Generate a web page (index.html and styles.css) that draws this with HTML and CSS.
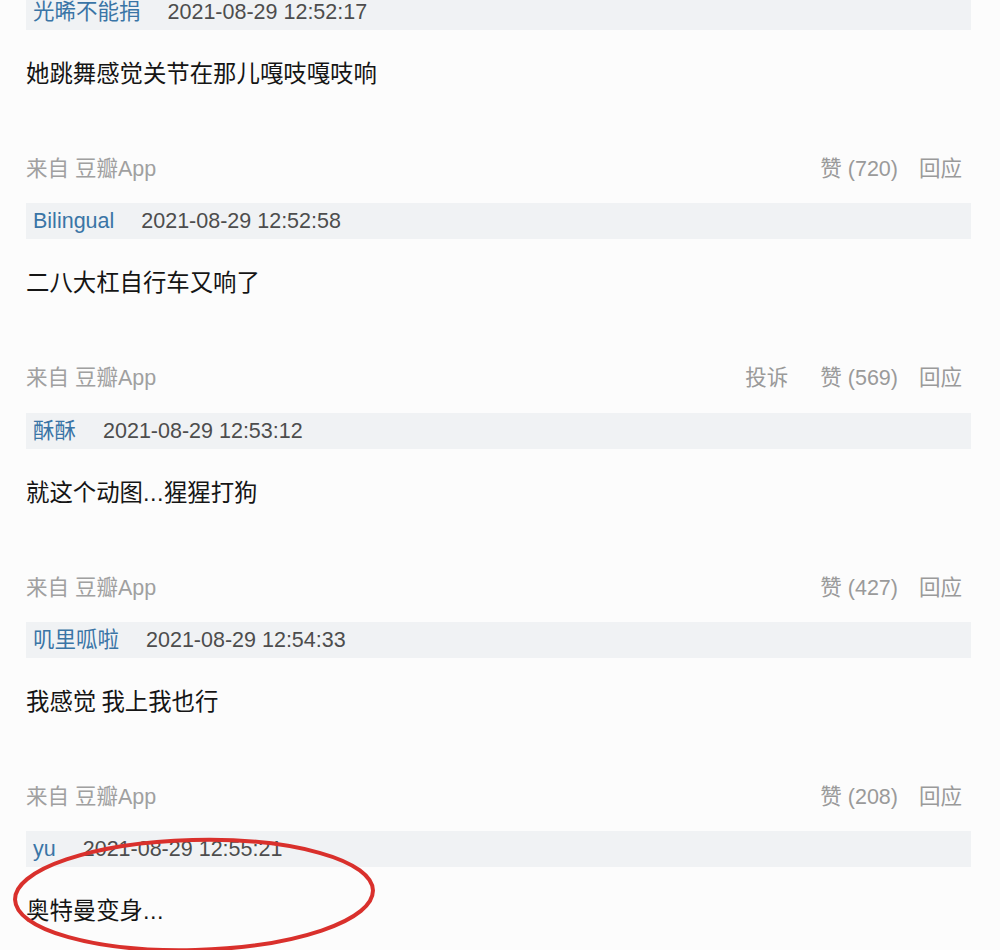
FILE: index.html
```html
<!DOCTYPE html>
<html lang="zh">
<head>
<meta charset="utf-8">
<link rel="stylesheet" href="styles.css">
</head>
<body>
<div class="page">
  <div class="comment">
    <div class="head"><span class="name">光晞不能捐</span><span class="time">2021-08-29 12:52:17</span></div>
    <p class="text">她跳舞感觉关节在那儿嘎吱嘎吱响</p>
    <div class="foot"><span class="src">来自 豆瓣App</span><span class="acts"><span class="like">赞 (720)</span><span class="reply">回应</span></span></div>
  </div>
  <div class="comment">
    <div class="head"><span class="name">Bilingual</span><span class="time">2021-08-29 12:52:58</span></div>
    <p class="text">二八大杠自行车又响了</p>
    <div class="foot"><span class="src">来自 豆瓣App</span><span class="acts"><span class="report">投诉</span><span class="like">赞 (569)</span><span class="reply">回应</span></span></div>
  </div>
  <div class="comment">
    <div class="head"><span class="name">酥酥</span><span class="time">2021-08-29 12:53:12</span></div>
    <p class="text">就这个动图<span class="dots">...</span>猩猩打狗</p>
    <div class="foot"><span class="src">来自 豆瓣App</span><span class="acts"><span class="like">赞 (427)</span><span class="reply">回应</span></span></div>
  </div>
  <div class="comment">
    <div class="head"><span class="name">叽里呱啦</span><span class="time">2021-08-29 12:54:33</span></div>
    <p class="text">我感觉 我上我也行</p>
    <div class="foot"><span class="src">来自 豆瓣App</span><span class="acts"><span class="like">赞 (208)</span><span class="reply">回应</span></span></div>
  </div>
  <div class="comment last">
    <div class="head"><span class="name">yu</span><span class="time">2021-08-29 12:55:21</span></div>
    <p class="text">奥特曼变身<span class="dots">...</span></p>
    <svg class="circle" width="380" height="130" viewBox="0 0 380 130">
      <ellipse cx="190" cy="65" rx="179" ry="55" fill="none" stroke="#d9302c" stroke-width="4" transform="rotate(-1.5 190 65)"/>
    </svg>
  </div>
</div>
</body>
</html>
```

FILE: styles.css
```css
html, body {
  margin: 0;
  padding: 0;
  background: #fcfcfc;
}
body {
  width: 1000px;
  height: 950px;
  overflow: hidden;
  font-family: "Noto Sans CJK SC", sans-serif;
}
.page {
  padding: 0 29px 0 26px;
  position: relative;
  top: -6px;
}
.comment {
  position: relative;
  margin-bottom: 19.3px;
}
.head {
  height: 36px;
  background: #f0f2f4;
  display: flex;
  align-items: center;
  padding-left: 7px;
  gap: 27px;
}
.name {
  color: #3a75a6;
  font-family: "Liberation Sans", "Noto Sans CJK SC", sans-serif;
  font-size: 21.5px;
  line-height: 36px;
}
.time {
  color: #4d4d4d;
  font-family: "Liberation Sans", sans-serif;
  font-size: 21.5px;
  line-height: 36px;
}
.text {
  margin: 27px 0 0 0;
  height: 30px;
  font-size: 23.4px;
  line-height: 30px;
  color: #151515;
}
.dots {
  font-family: "Liberation Sans", sans-serif;
  letter-spacing: 0.5px;
}
.foot {
  margin-top: 67px;
  height: 30px;
  display: flex;
  justify-content: space-between;
  align-items: center;
  padding-right: 9px;
  color: #9a9a9a;
  font-size: 21.5px;
  line-height: 30px;
  font-family: "Liberation Sans", "Noto Sans CJK SC", sans-serif;
}
.src {
  color: #a0a0a0;
}
.acts {
  display: flex;
  align-items: center;
}
.report {
  margin-right: 32px;
}
.like {
  margin-right: 21px;
}
.circle {
  position: absolute;
  left: -22px;
  top: -1px;
}
```
